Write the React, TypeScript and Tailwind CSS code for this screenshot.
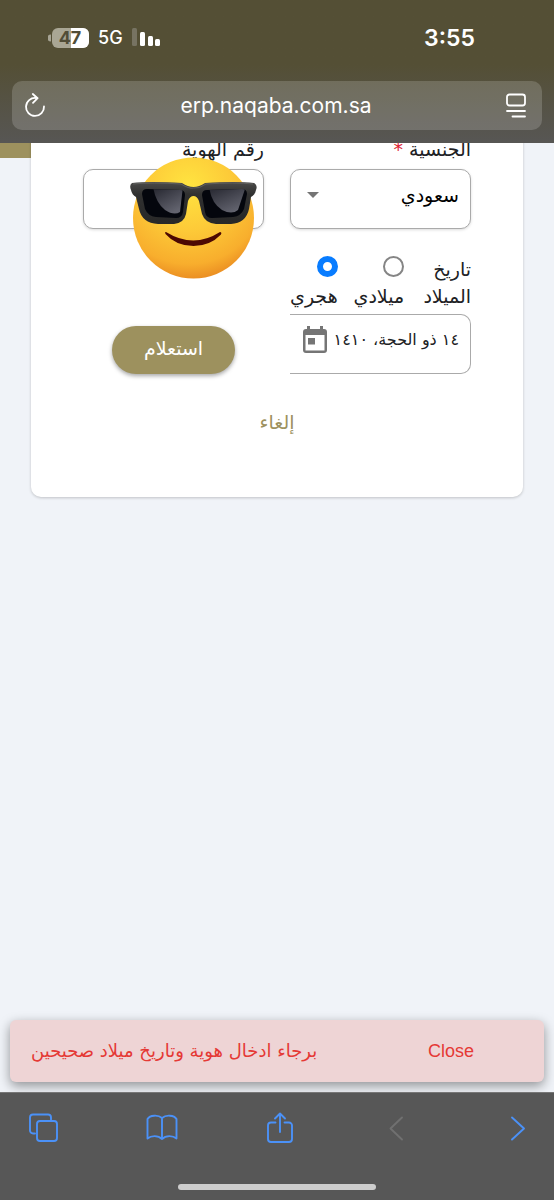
import type { ReactNode } from "react";

function StatusBar() {
  return (
    <div className="flex h-[76px] items-center justify-between pl-12 pr-[79px] text-white">
      <div className="flex items-center gap-2">
        <svg width="42" height="20" viewBox="0 0 42 20" role="img" aria-label="Battery 47%">
          <path d="M3 6.500a3.500 3.500 0 0 0 0 7z" fill="#a6a393" />
          <rect x="4" width="37" height="20" rx="6" fill="#a9a694" />
          <path d="M23 0h12a6 6 0 0 1 6 6v8a6 6 0 0 1-6 6H23z" fill="#fff" />
          <text x="22" y="16" textAnchor="middle" fontSize="18" fontWeight="700" fill="#514d37" fontFamily="Inter, sans-serif">
            47
          </text>
        </svg>
        <span className="font-['Inter',sans-serif] text-lg leading-5 font-medium">5G</span>
        <svg width="30" height="20" viewBox="0 0 30 20" aria-hidden="true">
          <rect x="1" y="0" width="5" height="18" rx="1.500" fill="#777362" />
          <rect x="9" y="4" width="5" height="14" rx="1.500" fill="#fff" />
          <rect x="17" y="8" width="5" height="10" rx="1.500" fill="#fff" />
          <rect x="24" y="11" width="5" height="7" rx="1.500" fill="#fff" />
        </svg>
      </div>
      <time className="font-['Inter',sans-serif] text-[23px] leading-6 font-semibold">3:55</time>
    </div>
  );
}

function AddressBar() {
  return (
    <div className="mx-3 mt-[5px] flex h-[49px] items-center justify-between rounded-[10px] bg-white/17 px-3 text-white">
      <button type="button" aria-label="Reload">
        <svg width="22" height="26" viewBox="0 0 22 26" fill="none" stroke="currentColor" strokeWidth="1.800" strokeLinecap="round" strokeLinejoin="round">
          <path d="M12 5A9 9 0 1 0 20 13.500" />
          <path d="M8.800 1 13.600 5.200 9 9.800" />
        </svg>
      </button>
      <span className="font-['Inter',sans-serif] text-[21px] leading-7">erp.naqaba.com.sa</span>
      <button type="button" aria-label="Page settings" className="pr-1">
        <svg width="20" height="25" viewBox="0 0 20 25" fill="none" stroke="currentColor" strokeWidth="1.800" strokeLinecap="round">
          <rect x="1" y="1.500" width="18" height="11" rx="2.500" />
          <path d="M1 18h18M6.500 23.500H19" />
        </svg>
      </button>
    </div>
  );
}

function CoolFace() {
  return (
    <svg viewBox="0 0 128 124" className="pointer-events-none absolute -top-[13px] left-[47px] w-32" role="img" aria-label="Smiling face with sunglasses">
      <defs>
        <radialGradient id="skin" cx="46%" cy="24%" r="80%">
          <stop offset="0" stopColor="#ffe440" />
          <stop offset="0.450" stopColor="#fdca38" />
          <stop offset="0.800" stopColor="#f8ae2d" />
          <stop offset="1" stopColor="#e7851f" />
        </radialGradient>
        <linearGradient id="lens" x1="0" y1="0" x2="0.600" y2="1">
          <stop offset="0" stopColor="#22232c" />
          <stop offset="1" stopColor="#62636e" />
        </linearGradient>
        <linearGradient id="frame" x1="0" y1="0" x2="0" y2="1">
          <stop offset="0" stopColor="#4a4a49" />
          <stop offset="0.300" stopColor="#303030" />
          <stop offset="1" stopColor="#282828" />
        </linearGradient>
        <clipPath id="left-lens">
          <path d="M12 38Q12 33 17 33L50 34Q55 34 55 39L53 56Q52 62 46 62L26 61Q18 60 15 53Z" />
        </clipPath>
        <clipPath id="right-lens">
          <path d="M117 38Q117 33 112 33L77 34Q72 34 72 39L75 56Q76 62 82 62L103 61Q111 60 114 53Z" />
        </clipPath>
      </defs>
      <circle cx="63.500" cy="62" r="60.500" fill="url(#skin)" />
      <path d="M2 27Q20 25 52 27Q58 31 63.500 31Q69 31 75 27Q107 25 124 27Q128 29 126 34Q125 39 121 41L119 53Q116 67 101 68L86 68Q75 67 72 58L69 45Q67 40 63.500 40Q60 40 58 45L56 58Q54 67 44 68L28 68Q12 67 9 53L6 41Q2 39 1 34Q-1 29 2 27Z" fill="url(#frame)" />
      <g clipPath="url(#left-lens)">
        <rect x="10" y="30" width="48" height="34" fill="#04060d" />
        <path d="M23 30H53L50 56Q44 60 35 54Q25 46 23 30Z" fill="url(#lens)" />
      </g>
      <g clipPath="url(#right-lens)">
        <rect x="70" y="30" width="48" height="34" fill="#04060d" />
        <path d="M79 30H116L108 54Q102 59 92 54Q81 47 79 30Z" fill="url(#lens)" />
      </g>
      <path d="M3 28Q22 26 51 28Q59 33 63.500 32Q69 33 76 28Q105 26 123 28" fill="none" stroke="#60605e" strokeWidth="1" />
      <path d="M36 76Q63.500 93 90 76Q92 76 91 78.500Q80 90 63.500 90Q46 90 35.500 78Q34.500 75.500 36 76Z" fill="#4c0803" />
    </svg>
  );
}

function RadioOption({ label, checked }: { label: string; checked?: boolean }) {
  return (
    <label className="flex flex-col items-start gap-[6px]">
      <input
        type="radio"
        name="calendar"
        defaultChecked={checked}
        className="size-[21px] appearance-none rounded-full border-2 border-[#858585] bg-white checked:border-[6px] checked:border-[#087cff]"
      />
      <span>{label}</span>
    </label>
  );
}

function LookupForm() {
  return (
    <form className="mx-[31px] -mt-3 rounded-b-[10px] bg-white px-[52px] pb-[59px] shadow-[0_1px_3px_rgba(0,0,0,0.2)]" onSubmit={(e) => e.preventDefault()}>
      <div className="grid grid-cols-2 gap-x-[26px]">
        <div>
          <label htmlFor="nationality" className="block h-[38px] pt-[6px] text-[19px] leading-6">
            الجنسية <span className="text-[#e02434]">*</span>
          </label>
          <div className="relative">
            <select id="nationality" className="h-[60px] w-full appearance-none rounded-[10px] border border-[#aaa] bg-white px-[11px] pb-2 text-[19px] text-black shadow-[0_1px_3px_rgba(0,0,0,0.15)]">
              <option>سعودي</option>
            </select>
            <svg width="12" height="6" viewBox="0 0 12 6" className="pointer-events-none absolute top-[23px] left-[17px]" aria-hidden="true">
              <path d="M0 0h12L6 6z" fill="#757575" />
            </svg>
          </div>
        </div>
        <div>
          <label htmlFor="identity" className="block h-[38px] pt-[6px] text-[19px] leading-6">
            رقم الهوية
          </label>
          <div className="relative">
            <input id="identity" type="text" className="h-[60px] w-full rounded-[10px] border border-[#aaa] bg-white px-3 shadow-[0_1px_3px_rgba(0,0,0,0.15)]" />
            <CoolFace />
          </div>
        </div>
      </div>
      <div className="mt-[27px] grid grid-cols-2 items-end gap-x-[26px]">
        <div>
          <div role="group" aria-label="نوع التقويم" className="flex justify-between text-[19px] leading-[27px]">
            <label htmlFor="birth-date" className="w-[51px]">
              تاريخ الميلاد
            </label>
            <RadioOption label="ميلادي" />
            <RadioOption label="هجري" checked />
          </div>
          <div className="mt-1 flex h-[60px] items-center gap-[6px] rounded-r-[10px] border border-l-0 border-[#aaa] pr-[11px] pb-2">
            <input id="birth-date" type="text" defaultValue="١٤ ذو الحجة، ١٤١٠" className="w-[126px] bg-transparent text-[16px]" />
            <button type="button" aria-label="فتح التقويم">
              <svg width="24" height="28" viewBox="0 0 24 28" aria-hidden="true">
                <path d="M4 0h3v3h10V0h3v3h1a3 3 0 0 1 3 3v18a3 3 0 0 1-3 3H3a3 3 0 0 1-3-3V6a3 3 0 0 1 3-3h1zM2.500 9v15.500h19V9zM5 12h7v6.500H5z" fillRule="evenodd" fill="#757575" />
              </svg>
            </button>
          </div>
        </div>
        <button type="submit" className="mx-[29px] h-12 rounded-full bg-[#9d915e] pb-1 text-[19px] text-white shadow-[0_2px_4px_rgba(0,0,0,0.35)]">
          استعلام
        </button>
      </div>
      <div className="mt-8 flex justify-center">
        <button type="button" className="text-[19px] leading-8 text-[#9d915e]">
          إلغاء
        </button>
      </div>
    </form>
  );
}

function Snackbar() {
  return (
    <div role="alert" dir="ltr" className="mx-[10px] mt-auto mb-[10px] flex h-[62px] items-center justify-between rounded-md bg-[#eed4d5] pr-[70px] pl-[21px] text-lg text-[#e53935] shadow-[0_4px_12px_rgba(0,0,0,0.4)]">
      <p dir="rtl" className="whitespace-nowrap">
        برجاء ادخال هوية وتاريخ ميلاد صحيحين
      </p>
      <button type="button" className="font-['Liberation_Sans',sans-serif]">
        Close
      </button>
    </div>
  );
}

function ToolbarButton({ label, disabled, children }: { label: string; disabled?: boolean; children: ReactNode }) {
  return (
    <button type="button" aria-label={label} disabled={disabled} className="text-[#4b91f7] disabled:text-[#707070]">
      <svg width="32" height="34" viewBox="0 0 32 34" fill="none" stroke="currentColor" strokeWidth="1.900" strokeLinecap="round" strokeLinejoin="round">
        {children}
      </svg>
    </button>
  );
}

function BottomToolbar() {
  return (
    <footer className="flex h-[108px] flex-col items-center justify-between border-t border-[#777] bg-[#575757] pt-[18px] pb-[10px]">
      <nav aria-label="Browser" className="flex w-full justify-between pr-[22px] pl-7">
        <ToolbarButton label="Tabs">
          <path d="M7 22.500H5a3 3 0 0 1-3-3V6.500a3 3 0 0 1 3-3h15a3 3 0 0 1 3 3v2" />
          <rect x="9" y="10" width="20" height="20" rx="3" />
        </ToolbarButton>
        <ToolbarButton label="Bookmarks">
          <path d="M16 7C12 3.500 4 4 1.500 8v19.500C5 24.500 12 24 16 28C20 24 27 24.500 30.500 27.500V8C28 4 20 3.500 16 7zV28" />
        </ToolbarButton>
        <ToolbarButton label="Share">
          <path d="M11.500 11.500H7a3 3 0 0 0-3 3V28a3 3 0 0 0 3 3h18a3 3 0 0 0 3-3V14.500a3 3 0 0 0-3-3h-4.500M16 21V2.500M11 7.500l5-5 5 5" />
        </ToolbarButton>
        <ToolbarButton label="Back" disabled>
          <path d="M20 6.500 8.500 17.500 20 28.500" />
        </ToolbarButton>
        <ToolbarButton label="Forward">
          <path d="M12 6.500l12 11-12 11" />
        </ToolbarButton>
      </nav>
      <div className="h-[6px] w-[198px] rounded-full bg-[#cdcdcd]" />
    </footer>
  );
}

export default function App() {
  return (
    <div className="flex min-h-screen flex-col bg-[#f0f3f8] font-['DejaVu_Sans',sans-serif] text-[#202124]">
      <header className="z-10 h-[143px] bg-linear-to-b from-[#544f35] from-45% to-[#575654]">
        <StatusBar />
        <AddressBar />
      </header>
      <main dir="rtl" className="flex flex-1 flex-col overflow-hidden bg-[linear-gradient(#9d915e,#9d915e)] bg-[length:31px_15px] bg-left-top bg-no-repeat">
        <LookupForm />
        <Snackbar />
      </main>
      <BottomToolbar />
    </div>
  );
}
